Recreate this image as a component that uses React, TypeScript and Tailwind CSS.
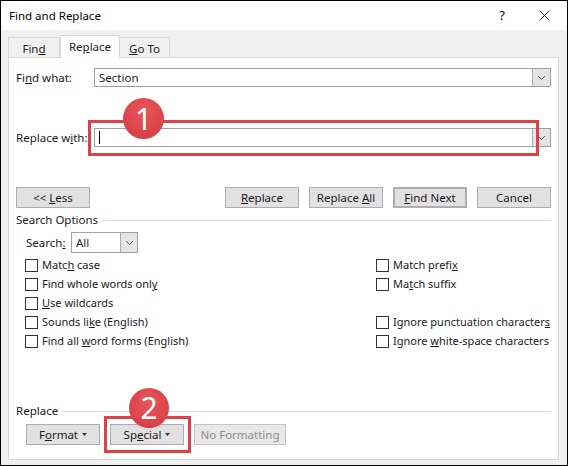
import React from "react";

const font = { fontFamily: '"Noto Sans", "Liberation Sans", sans-serif' };

function Chevron() {
  return (
    <svg width="9" height="6" viewBox="0 0 9 6" className="block">
      <polyline points="1,1 4.5,4.5 8,1" fill="none" stroke="#606060" strokeWidth="1" />
    </svg>
  );
}

function Caret() {
  return (
    <svg width="5" height="3" viewBox="0 0 5 3" className="inline-block ml-[4px] mb-[2px]">
      <polygon points="0,0 5,0 2.5,3" fill="#333" />
    </svg>
  );
}

function Btn({ children, w = "w-[74px]", primary = false, disabled = false }: { children: React.ReactNode; w?: string; primary?: boolean; disabled?: boolean }) {
  return (
    <div
      className={`${w} h-[21px] flex items-center justify-center text-[11.5px] leading-none whitespace-nowrap ${
        primary ? "border-2 border-[#0078d7]" : "border"
      } ${disabled ? "text-[#8d8d8d] bg-[#e8e8e8] border-[#c5c5c5]" : "text-[#1a1a1a] bg-[#e1e1e1] border-[#adadad]"}`}
    >
      <span>{children}</span>
    </div>
  );
}

function Combo({ value, caret = false }: { value?: string; caret?: boolean }) {
  return (
    <div className="flex-1 h-[19px] flex border border-[#a0a0a0] bg-white">
      <div className="flex-1 flex items-center pl-[4px] text-[11.5px] text-[#1a1a1a]">
        {caret && <span className="w-px h-[13px] bg-black" />}
        {value}
      </div>
      <div className="w-[18px] flex items-center justify-center bg-[#e5e5e5] border-l border-[#acacac]">
        <Chevron />
      </div>
    </div>
  );
}

function Check({ children }: { children: React.ReactNode }) {
  return (
    <div className="h-[19px] flex items-center gap-[4px] text-[11px] text-[#1a1a1a] whitespace-nowrap">
      <span className="w-[13px] h-[13px] border border-[#333] bg-white shrink-0" />
      <span>{children}</span>
    </div>
  );
}

function Section({ label }: { label: string }) {
  return (
    <div className="flex items-center gap-[4px] h-[14px] text-[11.5px] text-[#1a1a1a]">
      <span>{label}</span>
      <span className="flex-1 h-px bg-[#dcdcdc]" />
    </div>
  );
}

export default function App() {
  return (
    <div className="relative w-[568px] h-[466px] border border-black bg-[#f0f0f0] flex flex-col overflow-hidden" style={font}>
      {/* title bar */}
      <div className="h-[29px] bg-white flex items-center pl-[8px] text-[11.5px] text-black">
        <span className="flex-1">Find and Replace</span>
        <span className="w-[14px] text-center text-[13px] mr-[30px]">?</span>
        <svg width="11" height="11" viewBox="0 0 11 11" className="mr-[17px]">
          <path d="M0.5 0.5 L10.5 10.5 M10.5 0.5 L0.5 10.5" stroke="#222" strokeWidth="1" />
        </svg>
      </div>

      {/* tabs */}
      <div className="flex items-end h-[28px] pl-[7px] mt-[-1px] text-[11.5px] text-[#1a1a1a]">
        <div className="w-[52px] h-[20px] border border-b-0 border-[#d9d9d9] bg-[#f0f0f0] flex items-center justify-center pt-[2px]">
          <span>Fin<u>d</u></span>
        </div>
        <div className="w-[60px] h-[23px] mb-[-1px] border border-b-0 border-[#d9d9d9] bg-white flex items-center justify-center relative z-10">
          <span>Re<u>p</u>lace</span>
        </div>
        <div className="w-[50px] h-[20px] border border-b-0 border-l-0 border-[#d9d9d9] bg-[#f0f0f0] flex items-center justify-center pt-[2px]">
          <span><u>G</u>o To</span>
        </div>
      </div>

      {/* panel */}
      <div className="ml-[7px] mr-[8px] h-[403px] bg-white border border-[#d9d9d9] px-[7px] flex flex-col">
        <div className="mt-[10px] flex items-center">
          <span className="w-[78px] shrink-0 text-[11.5px] text-[#1a1a1a] whitespace-nowrap">Fi<u>n</u>d what:</span>
          <Combo value="Section" />
        </div>
        <div className="mt-[41px] flex items-center">
          <span className="w-[78px] shrink-0 text-[11.5px] text-[#1a1a1a] whitespace-nowrap">Replace w<u>i</u>th:</span>
          <Combo caret />
        </div>

        <div className="mt-[40px] flex items-center">
          <Btn>&lt;&lt; <u>L</u>ess</Btn>
          <div className="flex-1" />
          <div className="flex gap-[10px]">
            <Btn><u>R</u>eplace</Btn>
            <Btn>Replace <u>A</u>ll</Btn>
            <Btn primary><u>F</u>ind Next</Btn>
            <Btn>Cancel</Btn>
          </div>
        </div>

        <div className="mt-[5px]">
          <Section label="Search Options" />
        </div>

        <div className="mt-[5px] ml-[10px] flex items-center h-[21px]">
          <span className="w-[45px] text-[11.5px] text-[#1a1a1a]">Search<u>:</u></span>
          <div className="w-[67px] h-[21px] flex border border-[#a0a0a0] bg-white">
            <div className="flex-1 flex items-center pl-[4px] text-[11.5px] text-[#1a1a1a]">All</div>
            <div className="w-[17px] flex items-center justify-center bg-[#e5e5e5] border-l border-[#acacac]">
              <Chevron />
            </div>
          </div>
        </div>

        <div className="mt-[3px] ml-[9px] flex">
          <div className="w-[351px] shrink-0 flex flex-col">
            <Check>Matc<u>h</u> case</Check>
            <Check>Find whole words onl<u>y</u></Check>
            <Check><u>U</u>se wildcards</Check>
            <Check>Sounds li<u>k</u>e (English)</Check>
            <Check>Find all <u>w</u>ord forms (English)</Check>
          </div>
          <div className="flex flex-col">
            <Check>Match prefi<u>x</u></Check>
            <Check>Ma<u>t</u>ch suffix</Check>
            <div className="h-[19px]" />
            <Check>Ignore punctuation character<u>s</u></Check>
            <Check>Ignore <u>w</u>hite-space characters</Check>
          </div>
        </div>

        <div className="mt-[53px]">
          <Section label="Replace" />
        </div>

        <div className="mt-[6px] ml-[10px] flex gap-[10px]">
          <Btn>F<u>o</u>rmat<Caret /></Btn>
          <Btn>Sp<u>e</u>cial<Caret /></Btn>
          <Btn w="w-[92px]" disabled>No Formatting</Btn>
        </div>
      </div>

      {/* annotations */}
      <div className="absolute left-[87px] top-[119px] w-[451px] h-[36px] border-[3px] border-[#dc4248]" />
      <div className="absolute left-[103px] top-[415px] w-[87px] h-[37px] border-[3px] border-[#dc4248]" />
      <div className="absolute left-[122px] top-[97px] w-[41px] h-[41px] rounded-full bg-[radial-gradient(circle_at_50%_35%,#e8555a,#d23a40)] flex items-center justify-center text-white text-[30px] leading-none">
        1
      </div>
      <div className="absolute left-[128px] top-[387px] w-[40px] h-[40px] rounded-full bg-[radial-gradient(circle_at_50%_35%,#e8555a,#d23a40)] flex items-center justify-center text-white text-[30px] leading-none">
        2
      </div>
    </div>
  );
}
